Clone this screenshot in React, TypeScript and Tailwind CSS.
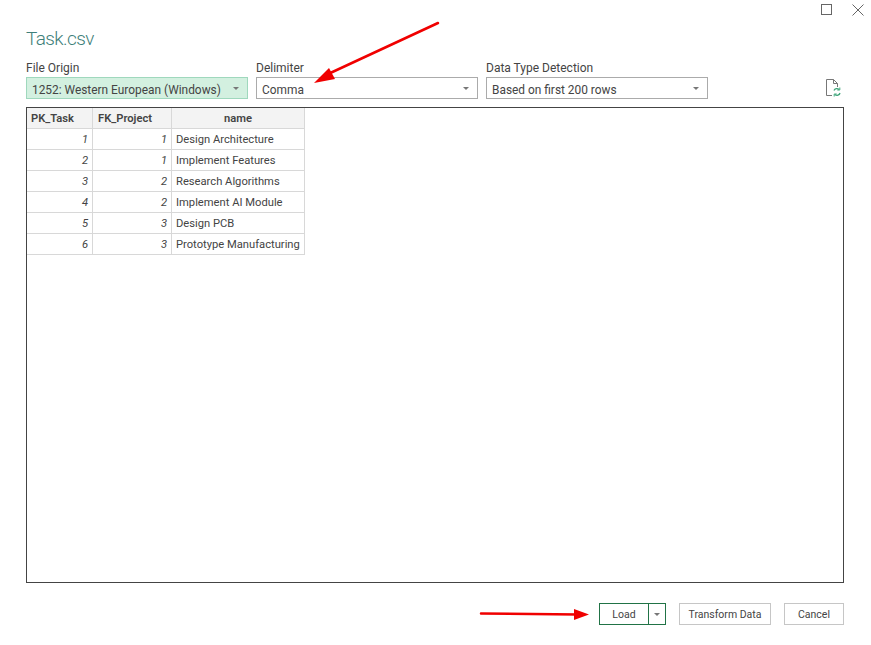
const rows: [number, number, string][] = [
  [1, 1, "Design Architecture"],
  [2, 1, "Implement Features"],
  [3, 2, "Research Algorithms"],
  [4, 2, "Implement AI Module"],
  [5, 3, "Design PCB"],
  [6, 3, "Prototype Manufacturing"],
];

function Caret() {
  return (
    <svg width="6" height="3" viewBox="0 0 6 3" className="shrink-0">
      <path d="M0 0H6L3 3Z" fill="#777777" />
    </svg>
  );
}

function Field({ label, value, width, green }: { label: string; value: string; width: string; green?: boolean }) {
  return (
    <div className={`flex flex-col ${width}`}>
      <div className="h-[20px] pt-[1px] text-[12px] leading-[20px] whitespace-nowrap text-[#444]">{label}</div>
      <div
        className={
          green
            ? "flex h-[22px] items-center justify-between border border-[#9fd8bd] bg-[#d3f0e0] pl-[5px] pr-[8px] text-[11.9px] whitespace-nowrap text-[#444]"
            : "flex h-[22px] items-center justify-between border border-[#ababab] bg-white pl-[5px] pr-[8px] text-[11.9px] whitespace-nowrap text-[#444]"
        }
      >
        <span className="pt-[3px] leading-[16px]">{value}</span>
        <Caret />
      </div>
    </div>
  );
}

export default function App() {
  return (
    <div className="relative flex h-[645px] w-[871px] flex-col overflow-hidden bg-white font-['Roboto',sans-serif] text-[#444]">
      <div className="flex h-[27px] items-end justify-end gap-[20px] pr-[7px]">
        <svg width="11" height="11" viewBox="0 0 11 11" className="mb-[12px]">
          <rect x="0.5" y="0.5" width="10" height="10" fill="none" stroke="#666" />
        </svg>
        <svg width="12" height="12" viewBox="0 0 12 12" className="mb-[11px]">
          <path d="M0.5 0.5L11.5 11.5M11.5 0.5L0.5 11.5" stroke="#666" fill="none" />
        </svg>
      </div>

      <div className="flex flex-1 flex-col pl-[26px] pr-[27px]">
        <h1 className="h-[30px] text-[19px] leading-[23px] font-light tracking-[-0.6px] text-[#3f7f7a]">Task.csv</h1>

        <div className="flex items-end">
          <Field label="File Origin" value="1252: Western European (Windows)" width="w-[222px]" green />
          <Field label="Delimiter" value="Comma" width="ml-[8px] w-[222px]" />
          <Field label="Data Type Detection" value="Based on first 200 rows" width="ml-[8px] w-[222px]" />
          <div className="ml-auto mb-[2px] mr-[3px]">
            <svg width="15" height="18" viewBox="0 0 15 18">
              <path d="M0.5 0.5H7.5L11.5 4.5V8M7.5 0.5V4.5H11.5M0.5 0.5V16.5H6" fill="none" stroke="#777" />
              <path d="M8 11.5A3 3 0 0 1 13 10.5M14 14A3 3 0 0 1 9 15.5" fill="none" stroke="#3fa57a" strokeWidth="1.3" />
              <path d="M13.8 8.5V11H11.3M8.2 17.5V15H10.7" fill="none" stroke="#3fa57a" />
            </svg>
          </div>
        </div>

        <div className="mt-[8px] h-[476px] border border-[#444] bg-white">
          <table className="w-[278px] table-fixed border-separate border-spacing-0 text-[11.2px] leading-none text-[#444]">
            <colgroup>
              <col className="w-[66px]" />
              <col className="w-[79px]" />
              <col className="w-[133px]" />
            </colgroup>
            <thead>
              <tr className="h-[21px] bg-[#f3f3f3]">
                <th className="border-r border-b border-[#d8d8d8] pt-[2px] pl-[4px] text-left font-semibold">PK_Task</th>
                <th className="border-r border-b border-[#d8d8d8] pt-[2px] pl-[5px] text-left font-semibold">FK_Project</th>
                <th className="border-r border-b border-[#d8d8d8] pt-[2px] text-center font-semibold">name</th>
              </tr>
            </thead>
            <tbody>
              {rows.map(([a, b, name]) => (
                <tr key={a} className="h-[21px]">
                  <td className="border-r border-b border-[#d8d8d8] pt-[2px] pr-[4px] text-right italic">{a}</td>
                  <td className="border-r border-b border-[#d8d8d8] pt-[2px] pr-[4px] text-right italic">{b}</td>
                  <td className="border-r border-b border-[#d8d8d8] pt-[2px] pl-[4px] whitespace-nowrap">{name}</td>
                </tr>
              ))}
            </tbody>
          </table>
        </div>

        <div className="mt-[20px] flex justify-end text-[10.5px] text-[#444]">
          <div className="flex h-[22px] w-[67px] border border-[#217346]">
            <div className="flex flex-1 items-center justify-center pt-[1px]">Load</div>
            <div className="flex w-[17px] items-center justify-center border-l border-[#217346]">
              <Caret />
            </div>
          </div>
          <div className="ml-[13px] flex h-[22px] w-[92px] items-center justify-center border border-[#c6c6c6] pt-[1px]">Transform Data</div>
          <div className="ml-[13px] flex h-[22px] w-[60px] items-center justify-center border border-[#c6c6c6] pt-[1px]">Cancel</div>
        </div>
      </div>

      <svg className="pointer-events-none absolute top-0 left-0" width="871" height="645" viewBox="0 0 871 645">
        <path d="M438 23L326 75" stroke="#f00000" strokeWidth="2.5" fill="none" strokeLinecap="round" />
        <path d="M314 83L329 68L335 79Z" fill="#f00000" />
        <path d="M481 613.5L578 614.5" stroke="#f00000" strokeWidth="2.5" fill="none" strokeLinecap="round" />
        <path d="M589 614.5L574 609V620Z" fill="#f00000" />
      </svg>
    </div>
  );
}
